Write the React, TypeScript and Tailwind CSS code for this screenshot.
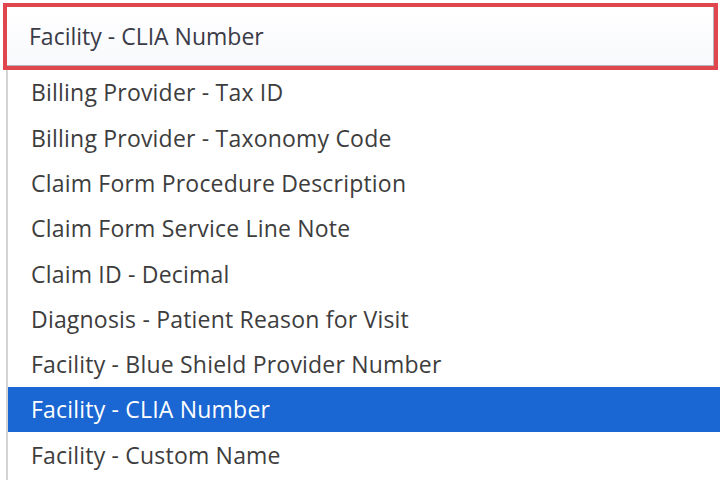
import React from "react";

const items = [
  "Billing Provider - Tax ID",
  "Billing Provider - Taxonomy Code",
  "Claim Form Procedure Description",
  "Claim Form Service Line Note",
  "Claim ID - Decimal",
  "Diagnosis - Patient Reason for Visit",
  "Facility - Blue Shield Provider Number",
  "Facility - CLIA Number",
  "Facility - Custom Name",
];

export default function App() {
  return (
    <div
      className="w-[720px] h-[480px] bg-white overflow-hidden pt-[3px]"
      style={{ fontFamily: '"Open Sans", sans-serif' }}
    >
      <div className="ml-[3px] w-[715px] h-[67px] border-[4px] border-[#e0464d]">
        <div className="h-full border-r border-b border-[#b8b4bc] bg-gradient-to-b from-white to-[#f8f9fc] flex items-center pl-[22px] text-[23px] text-[#3a3a48]">
          Facility - CLIA Number
        </div>
      </div>
      <div className="ml-[6px] border-l-2 border-[#d4d4d4] w-[800px] h-[420px]">
        {items.map((t, i) => (
          <div
            key={t}
            className={
              i === 7
                ? "h-[45.3px] flex items-center pl-[23px] text-[23px] tracking-[0.2px] bg-[#1a66d2] text-white"
                : "h-[45.3px] flex items-center pl-[23px] text-[23px] tracking-[0.2px] text-[#3d3d3d]"
            }
          >
            {t}
          </div>
        ))}
      </div>
    </div>
  );
}
